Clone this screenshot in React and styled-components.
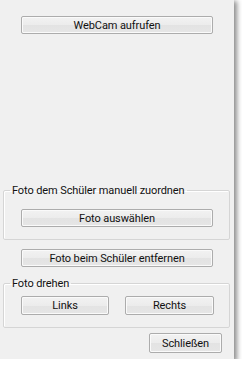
import React from 'react';
import styled, { createGlobalStyle } from 'styled-components';

const GlobalStyle = createGlobalStyle`
  html, body {
    margin: 0;
    padding: 0;
    background: #ffffff;
  }
  body {
    font-family: Roboto, "Liberation Sans", Arial, sans-serif;
    font-size: 11px;
    letter-spacing: -0.1px;
    color: #000;
  }
`;

const Window = styled.div`
  width: 234px;
  height: 359px;
  background: #f0f0f0;
  box-shadow: 2px 2px 5px 1px rgba(0, 0, 0, 0.45);
  display: flex;
  flex-direction: column;
  box-sizing: border-box;
  padding-top: 16px;
`;

const Button = styled.button`
  box-sizing: border-box;
  height: ${(p) => p.$h || 18}px;
  width: ${(p) => p.$w || 192}px;
  margin-left: ${(p) => p.$left || 0}px;
  margin-top: ${(p) => p.$top || 0}px;
  padding: 0;
  border: 1px solid #acacac;
  border-radius: 2px;
  background: linear-gradient(to bottom, #f2f2f2 0%, #ececec 50%, #e3e3e3 51%, #e6e6e6 100%);
  box-shadow: inset 0 0 0 1px #fafafa;
  font-family: inherit;
  font-size: inherit;
  letter-spacing: inherit;
  color: #111;
  line-height: 1;
  cursor: pointer;
`;

const Spacer = styled.div`
  flex: 1;
`;

const Group = styled.fieldset`
  margin: ${(p) => p.$top || 0}px 0 0 3px;
  width: 227px;
  box-sizing: border-box;
  padding: 0 0 ${(p) => p.$bottom || 0}px 0;
  border: 1px solid #d5d5d5;
  border-radius: 2px;
  box-shadow: inset 1px 1px 0 #ffffff;
`;

const Legend = styled.legend`
  margin-left: 6px;
  padding: 0 2px;
  line-height: 15px;
  color: #111;
`;

const Row = styled.div`
  display: flex;
  gap: ${(p) => p.$gap || 0}px;
  padding-left: 17px;
  margin-top: ${(p) => p.$top || 0}px;
`;

const Footer = styled.div`
  display: flex;
  justify-content: flex-end;
  padding-right: 12px;
  margin-top: 5px;
  margin-bottom: 6px;
`;

export default function App() {
  return (
    <>
      <GlobalStyle />
      <Window>
        <Button $left={21}>WebCam aufrufen</Button>
        <Spacer />
        <Group $bottom={12}>
          <Legend>Foto dem Schüler manuell zuordnen</Legend>
          <Row $top={11}>
            <Button>Foto auswählen</Button>
          </Row>
        </Group>
        <Button $left={21} $top={9}>Foto beim Schüler entfernen</Button>
        <Group $top={9} $bottom={12}>
          <Legend>Foto drehen</Legend>
          <Row $top={5} $gap={16}>
            <Button $w={88} $h={19}>Links</Button>
            <Button $w={89} $h={19}>Rechts</Button>
          </Row>
        </Group>
        <Footer>
          <Button $w={73} $h={20}>Schließen</Button>
        </Footer>
      </Window>
    </>
  );
}
